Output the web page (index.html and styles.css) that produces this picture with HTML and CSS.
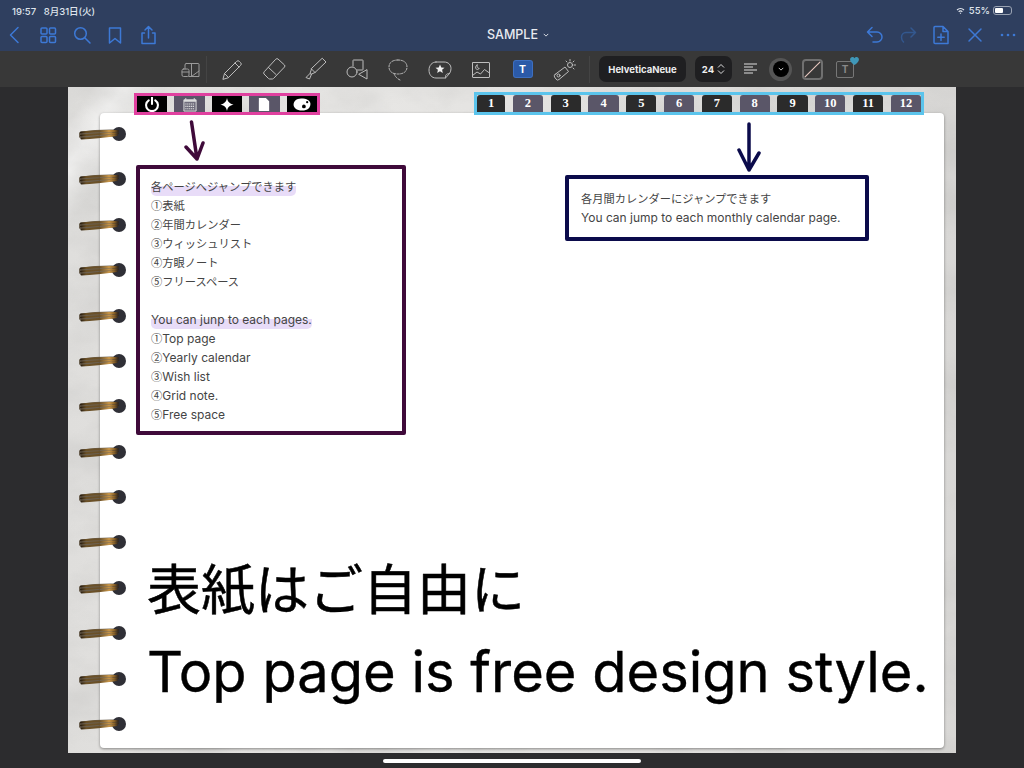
FILE: index.html
```html
<!DOCTYPE html>
<html lang="ja">
<head>
<meta charset="utf-8">
<title>SAMPLE</title>
<link rel="stylesheet" href="styles.css">
</head>
<body>
<svg class="defs" width="0" height="0">
  <defs>
    <linearGradient id="gold" x1="0" x2="1" y1="0" y2="0">
      <stop offset="0" stop-color="#2b1f10"/>
      <stop offset=".14" stop-color="#6b5127"/>
      <stop offset=".5" stop-color="#6a5028"/>
      <stop offset=".76" stop-color="#c9974a"/>
      <stop offset=".9" stop-color="#8a6228"/>
      <stop offset="1" stop-color="#33261a"/>
    </linearGradient>
    <symbol id="ring" viewBox="0 0 48 20">
      <path d="M3 11Q18 8.500 38 9" fill="none" stroke="#3a2b16" stroke-width="7" stroke-linecap="round" opacity=".7"/>
      <circle cx="40" cy="10" r="7" fill="#2f2f36"/>
      <path d="M2 8.500Q16 6.500 39 7M2 11.500Q18 9.800 39 9.200M2.500 14.500Q18 13.500 38 11" fill="none" stroke="url(#gold)" stroke-width="2" stroke-linecap="round"/>
    </symbol>
    <filter id="marble" x="0" y="0" width="100%" height="100%">
      <feTurbulence type="fractalNoise" baseFrequency=".012 .02" numOctaves="5" seed="7"/>
      <feColorMatrix values="0 0 0 0 .45  0 0 0 0 .45  0 0 0 0 .44  1.600 0 0 0 -.62"/>
    </filter>
  </defs>
</svg>
<div class="app">
  <header class="top">
    <div class="status">
      <span>19:57&nbsp;&nbsp; 8月31日(火)</span>
      <span class="status-right">
        <svg class="wifi" viewBox="0 0 12 9"><path d="M.8 3.300a7.400 7.400 0 0 1 10.400 0l-1.200 1.200a5.700 5.700 0 0 0-8 0zM3 5.500a4.300 4.300 0 0 1 6 0L7.800 6.700a2.600 2.600 0 0 0-3.600 0zM6 7l1 1-1 1-1-1z" fill="currentColor"/></svg>
        <span>55%</span>
        <span class="battery"><span class="battery-fill"></span></span>
      </span>
    </div>
    <nav class="nav">
      <div class="nav-group">
        <svg class="nav-icon" viewBox="0 0 20 20"><path d="M13 2.500 5.500 10l7.500 7.500"/></svg>
        <svg class="nav-icon" viewBox="0 0 20 20"><rect x="3" y="3" width="6" height="6" rx="1"/><rect x="11.500" y="3" width="6" height="6" rx="1"/><rect x="3" y="11.500" width="6" height="6" rx="1"/><rect x="11.500" y="11.500" width="6" height="6" rx="1"/></svg>
        <svg class="nav-icon" viewBox="0 0 20 20"><circle cx="8.500" cy="8.500" r="5.800"/><path d="m13 13 5 5"/></svg>
        <svg class="nav-icon" viewBox="0 0 20 20"><path d="M4.500 3h11v15L10 13.500 4.500 18z"/></svg>
        <svg class="nav-icon" viewBox="0 0 20 20"><path d="M6.500 8H4v10.500h13V8h-2.500M10.500 13V2M7 5l3.500-3.500L14 5"/></svg>
      </div>
      <div class="title">SAMPLE <svg class="title-chev" viewBox="0 0 8 5"><path d="m1 1 3 3 3-3"/></svg></div>
      <div class="nav-group">
        <svg class="nav-icon" viewBox="0 0 20 20"><path d="M7 2.500 2.500 7 7 11.500M3 7h9a4.800 4.800 0 0 1 0 10H8"/></svg>
        <svg class="nav-icon dim" viewBox="0 0 20 20"><path d="M13 3l4.500 4.500L13 12M17 7.500H8a4.800 4.800 0 0 0-4.500 5c0 2 .8 3.300 2 4.500"/></svg>
        <svg class="nav-icon" viewBox="0 0 20 20"><path d="M4 1.500h8l5 5v12H4a1 1 0 0 1-1-1v-15a1 1 0 0 1 1-1zM12 1.500v5h5M10 9v6.500M6.800 12.300H13.200"/></svg>
        <svg class="nav-icon" viewBox="0 0 20 20"><path d="m4 4 12 12M16 4 4 16"/></svg>
        <svg class="nav-icon" viewBox="0 0 20 20"><circle cx="4" cy="10" r="1.300" class="solid"/><circle cx="10" cy="10" r="1.300" class="solid"/><circle cx="16" cy="10" r="1.300" class="solid"/></svg>
      </div>
    </nav>
  </header>

  <div class="toolbar">
    <svg class="tool faint" viewBox="0 0 24 24"><path d="M8 6.500h12.500a.8.8 0 0 1 .5.500v12.500H11M13.500 6.500v13M21 14l-7.500 5.500M7 12V8a1.500 1.500 0 0 1 1-1.500"/><rect x="4" y="12" width="7" height="7.500" rx="1.500"/><path d="M4 15h7"/></svg>
    <span class="divider"></span>
    <div class="tools">
      <svg class="tool" viewBox="0 0 24 24"><path d="m3 22 1.500-5.500L16.500 4.500a2 2 0 0 1 3 0l1 1a2 2 0 0 1 0 3L8.500 20.500zM4.500 16.500l4 4M15 6l4 4"/></svg>
      <svg class="tool" viewBox="0 0 24 24"><path d="M14 2a1.500 1.500 0 0 1 2 0l6.500 6a1.500 1.500 0 0 1 0 2L11.500 21.500a1.500 1.500 0 0 1-1 .5H7.500a1.500 1.500 0 0 1-1-.5L2 17a1.500 1.500 0 0 1 0-2zM6.500 10.500l7.500 7"/></svg>
      <svg class="tool" viewBox="0 0 24 24"><path d="M19.500 1.500 23 5 12 15.500 8.500 12zM8.500 12l-1.500 4.500 1 .8 4-1.800M7 16.500 3 20.500l3.500 1.500 2-4.700"/></svg>
      <svg class="tool" viewBox="0 0 24 24"><path d="M8 9V3.500a.5.500 0 0 1 .5-.5h9a.5.500 0 0 1 .5.500v9a.5.500 0 0 1-.5.500H12"/><circle cx="7" cy="15" r="5"/><path d="M22 13v9l-8-4.500z"/></svg>
      <svg class="tool dash" viewBox="0 0 24 24"><path d="M12 3c5.500 0 9 2.500 9 7s-3.500 7-9 7-9-2.500-9-7 3.500-7 9-7zM8 16.500c1 3 3 5 6 6.500"/></svg>
      <svg class="tool" viewBox="0 0 24 24"><path d="M8 5h8c4.500 0 7 3 7 6.500 0 2-.5 3.500-1.500 5L17.500 21H8c-4.500 0-7-3.500-7-8s3-8 7-8zM17.500 21c-.5-3 1-4.500 4-4.500"/><path class="solid" d="m12 7.500 1.300 2.900 3.200.3-2.400 2.100.7 3.100-2.800-1.600-2.800 1.600.7-3.100-2.400-2.100 3.200-.3z"/></svg>
      <svg class="tool" viewBox="0 0 24 24"><rect x="3.500" y="5.500" width="17" height="15" rx=".5"/><path d="m3.500 18.500 4.500-3.500 3.500 2 4-4.500 5 3.500M8 8c-1.500.8-2 3-.5 4.300 1 .4 2.200.1 2.700-1-1.200 0-2.200-.8-2.200-3.300z"/></svg>
      <span class="tool-text"><span class="tool-text-t">T</span></span>
      <svg class="tool" viewBox="0 0 24 24"><path d="m3 17.500 10-7.500 3.500 4.500-9.500 8a2 2 0 0 1-3-.5l-1.500-2a2 2 0 0 1 .5-2.500z"/><circle cx="6.500" cy="18.500" r="1.500"/><circle cx="18" cy="8" r="2.500"/><path d="M18 2.500V4M23.500 8H22M14 4l1 1M22 4l-1 1M22 12l-1-1"/></svg>
    </div>
    <span class="divider divider-b"></span>
    <span class="pill pill-font">HelveticaNeue</span>
    <span class="pill pill-size">24 <svg class="updown" viewBox="0 0 8 12"><path d="m1 4.500 3-3 3 3M1 7.500l3 3 3-3"/></svg></span>
    <svg class="align" viewBox="0 0 14 12"><path d="M0 1h13M0 4h9M0 7h13M0 10h9"/></svg>
    <span class="swatch"><span class="swatch-in"><svg viewBox="0 0 8 5"><path d="m1 1 3 3 3-3"/></svg></span></span>
    <span class="stroke-box"><svg viewBox="0 0 20 20"><path d="M1 19 19 1"/></svg></span>
    <span class="text-fav"><span class="text-fav-t">T</span><svg class="fav-heart" viewBox="0 0 10 9"><path d="M5 9C2 7 0 5 0 2.800 0 1 1.300 0 2.600 0 3.600 0 4.500.5 5 1.500 5.500.5 6.400 0 7.400 0 8.700 0 10 1 10 2.800 10 5 8 7 5 9z"/></svg></span>
  </div>

  <main class="stage">
    <section class="page">
      <svg class="marble"><rect width="100%" height="100%" filter="url(#marble)"/></svg>
      <div class="rings">
        <svg class="ring"><use href="#ring"/></svg><svg class="ring"><use href="#ring"/></svg><svg class="ring"><use href="#ring"/></svg><svg class="ring"><use href="#ring"/></svg><svg class="ring"><use href="#ring"/></svg><svg class="ring"><use href="#ring"/></svg><svg class="ring"><use href="#ring"/></svg><svg class="ring"><use href="#ring"/></svg><svg class="ring"><use href="#ring"/></svg><svg class="ring"><use href="#ring"/></svg><svg class="ring"><use href="#ring"/></svg><svg class="ring"><use href="#ring"/></svg><svg class="ring"><use href="#ring"/></svg><svg class="ring"><use href="#ring"/></svg>
      </div>

      <div class="sheet">
        <div class="big">
          <p class="big-jp">表紙はご自由に</p>
          <p class="big-en">Top page is free design style.</p>
        </div>
      </div>

      <div class="tabs tabs-pink">
        <span class="ptab"><svg viewBox="0 0 16 16"><path d="M4.500 3.500a6.300 6.300 0 1 0 7 0M8 .5V7.500" fill="none" stroke="#fff" stroke-width="2.200" stroke-linecap="round"/></svg></span>
        <span class="ptab alt"><svg viewBox="0 0 16 16"><path d="M1.500 3h13v12h-13z" fill="#6f6c7c" stroke="#ddd"/><path d="M1.500 3h13v2h-13zM3 1h1v2H3zM12 1h1v2h-1z" fill="#ddd"/><path d="M3 7.500h10M3 10h10M3 12.500h10" stroke="#ddd" stroke-width="1.200" stroke-dasharray="1.300 .7"/></svg></span>
        <span class="ptab"><svg viewBox="0 0 16 16"><path d="M8 1c.7 4 2.700 6 7 7-4.300 1-6.300 3-7 7-.7-4-2.700-6-7-7 4.300-1 6.300-3 7-7z" fill="#fff"/></svg></span>
        <span class="ptab alt"><svg viewBox="0 0 16 16"><path d="M2.500 1h7.500l3.500 3.500V15h-11z" fill="#fff"/></svg></span>
        <span class="ptab"><svg class="palette" viewBox="0 0 20 16"><path d="M9 1.500c6 0 10 2 10 6s-3 7-9 7c-6 0-9-3-9-6.500S4 1.500 9 1.500z" fill="#fff"/><circle cx="12" cy="10" r="2" fill="#000"/><circle cx="15.500" cy="5.500" r="1.200" fill="#000"/></svg></span>
      </div>

      <div class="tabs tabs-blue">
        <span class="ntab">1</span><span class="ntab alt">2</span><span class="ntab">3</span><span class="ntab alt">4</span><span class="ntab">5</span><span class="ntab alt">6</span><span class="ntab">7</span><span class="ntab alt">8</span><span class="ntab">9</span><span class="ntab alt">10</span><span class="ntab">11</span><span class="ntab alt">12</span>
      </div>

      <svg class="arrow arrow-left" viewBox="0 0 24 44"><path d="M7.500 2 13 39M2 27l11 12 6-16"/></svg>
      <svg class="arrow arrow-right" viewBox="0 0 24 50"><path d="M12 2v46M2 28l10 20 10-17"/></svg>

      <div class="note note-purple">
        <p class="jp"><span class="mark">各ページへジャンプできます</span></p>
        <p class="jp">①表紙</p>
        <p class="jp">②年間カレンダー</p>
        <p class="jp">③ウィッシュリスト</p>
        <p class="jp">④方眼ノート</p>
        <p class="jp">⑤フリースペース</p>
        <p>&nbsp;</p>
        <p><span class="mark">You can junp to each pages.</span></p>
        <p><span class="jp">①</span>Top page</p>
        <p><span class="jp">②</span>Yearly calendar</p>
        <p><span class="jp">③</span>Wish list</p>
        <p><span class="jp">④</span>Grid note.</p>
        <p><span class="jp">⑤</span>Free space</p>
      </div>

      <div class="note note-navy">
        <p class="jp">各月間カレンダーにジャンプできます</p>
        <p>You can jump to each monthly calendar page.</p>
      </div>
    </section>
    <div class="home-bar"></div>
  </main>
</div>
</body>
</html>
```
FILE: styles.css
```css
* { box-sizing: border-box; }
html, body { margin: 0; padding: 0; }
body {
  width: 1024px;
  height: 768px;
  overflow: hidden;
  background: #2c2c2e;
  font-family: Inter, "Noto Sans CJK JP", sans-serif;
}
p { margin: 0; }
.defs { position: absolute; }
.app { display: flex; flex-direction: column; height: 768px; }

/* top blue bar */
.top { height: 51px; background: #2f3f5f; flex: none; }
.status {
  height: 20px;
  padding: 1px 12px 0 12px;
  display: flex;
  justify-content: space-between;
  align-items: center;
  color: #dfe4ec;
  font-size: 9.500px;
  font-weight: 500;
}
.status-right { display: flex; align-items: center; gap: 3px; }
.wifi { width: 9px; height: 7px; margin-right: 1px; }
.battery {
  width: 19px;
  height: 9px;
  border: 1px solid #9aa3b3;
  border-radius: 3px;
  padding: 1px;
  display: flex;
}
.battery-fill { width: 55%; background: #fff; border-radius: 1px; }
.nav {
  height: 31px;
  padding: 0 6px 2px 5px;
  display: flex;
  align-items: center;
  justify-content: space-between;
}
.nav-group { display: flex; gap: 13.300px; }
.nav-icon {
  width: 20px;
  height: 20px;
  fill: none;
  stroke: #3d79d6;
  stroke-width: 1.500;
  stroke-linecap: round;
  stroke-linejoin: round;
}
.nav-icon.dim { stroke: #33588f; }
.nav-icon .solid { fill: #3d79d6; stroke: none; }
.title {
  color: #e8ebf1;
  font-size: 12.500px;
  font-weight: 500;
  display: flex;
  align-items: center;
  gap: 5px;
  margin-left: 13px;
}
.title-chev { width: 6px; height: 4px; fill: none; stroke: #e8ebf1; stroke-width: 1.200; }

/* tool bar */
.toolbar {
  height: 36px;
  flex: none;
  background: #383838;
  display: flex;
  align-items: center;
  padding-left: 178px;
}
.tool {
  width: 24px;
  height: 24px;
  flex: none;
  fill: none;
  stroke: #bdbdbd;
  stroke-width: 1;
  stroke-linejoin: round;
  stroke-linecap: round;
}
.tool.faint { stroke: #9a9a9a; }
.tool .solid { fill: #eee; stroke: none; }
.tool.dash { stroke-dasharray: 2 1.500; }
.divider { width: 1px; height: 27px; background: #444; margin: 0 13px 0 4px; flex: none; }
.divider-b { margin: 0 9px 0 13px; }
.tools { display: flex; gap: 17.500px; align-items: center; }
.tool-text { width: 24px; height: 24px; display: flex; align-items: center; justify-content: center; }
.tool-text-t {
  width: 18px;
  height: 16px;
  background: #2b5aa8;
  border-radius: 2px;
  color: #fff;
  font-size: 10.500px;
  font-weight: 700;
  display: flex;
  align-items: center;
  justify-content: center;
  box-shadow: 0 0 0 1px #3d6fc0;
}
.pill {
  height: 26px;
  background: #1f1f21;
  border-radius: 7px;
  color: #eee;
  font-size: 9.500px;
  font-weight: 700;
  display: flex;
  align-items: center;
  justify-content: center;
  flex: none;
}
.pill-font { width: 87px; }
.pill-size { width: 37px; margin-left: 9px; gap: 3px; }
.updown { width: 8px; height: 12px; fill: none; stroke: #ddd; stroke-width: 1; }
.align { width: 14px; height: 12px; margin-left: 12px; fill: none; stroke: #ddd; stroke-width: 1.100; flex: none; }
.swatch {
  width: 23px;
  height: 23px;
  margin-left: 11px;
  border-radius: 50%;
  background: #555;
  display: flex;
  align-items: center;
  justify-content: center;
  flex: none;
}
.swatch-in {
  width: 16px;
  height: 16px;
  border-radius: 50%;
  background: #000;
  display: flex;
  align-items: center;
  justify-content: center;
}
.swatch-in svg { width: 6px; height: 4px; fill: none; stroke: #ddd; stroke-width: 1.200; }
.stroke-box {
  width: 21px;
  height: 21px;
  margin-left: 10px;
  border: 2px solid #707070;
  border-radius: 4px;
  display: flex;
  flex: none;
}
.stroke-box svg { width: 100%; height: 100%; fill: none; stroke: #e8c8c0; stroke-width: 1.300; }
.text-fav {
  width: 18px;
  height: 17px;
  margin-left: 13px;
  border: 1px solid #777;
  border-radius: 2px;
  color: #888;
  font-size: 10px;
  font-weight: 700;
  display: flex;
  align-items: center;
  justify-content: center;
  position: relative;
  flex: none;
}
.fav-heart {
  position: absolute;
  top: -5px;
  right: -6px;
  width: 9px;
  height: 8px;
  fill: #3f97b8;
}

/* page */
.stage { flex: 1; padding: 0 68px; position: relative; }
.page {
  position: relative;
  height: 666px;
  padding: 26px 12px 5px 32px;
  display: flex;
  background:
    linear-gradient(125deg, transparent 20px, rgba(255,255,255,.55) 45px, transparent 80px),
    linear-gradient(90deg, #dfdedc, #e8e7e5 30%, #e0dfdd 70%, #d8d7d5);
}
.marble { position: absolute; left: 0; top: 0; width: 100%; height: 100%; opacity: .35; }
.sheet {
  position: relative;
  flex: 1;
  min-width: 0;
  background: #fff;
  border-radius: 4px;
  box-shadow: 0 1px 3px rgba(0,0,0,.4);
  display: flex;
  flex-direction: column;
  justify-content: flex-end;
}
.big { padding: 0 0 35px 47px; color: #000; white-space: nowrap; }
.big-jp { font-size: 54px; line-height: 82px; margin-bottom: -1px; -webkit-text-stroke: .5px #000; }
.big-en { font-size: 56px; line-height: 82px; -webkit-text-stroke: .4px #000; }

.rings {
  position: absolute;
  left: 11px;
  top: 37px;
  height: 610px;
  display: flex;
  flex-direction: column;
  justify-content: space-between;
  z-index: 1;
}
.ring { width: 48px; height: 20px; display: block; }

.tabs {
  position: absolute;
  display: flex;
  border-style: solid;
  border-width: 3px;
}
.tabs-pink {
  left: 66px;
  top: 6px;
  width: 186px;
  height: 22px;
  border-color: #e0409f;
  gap: 7px;
}
.tabs-blue {
  left: 406px;
  top: 5px;
  width: 450px;
  height: 23px;
  border-color: #5bc4ec;
  gap: 7.500px;
}
.ptab {
  flex: 1;
  background: #000;
  display: flex;
  align-items: center;
  justify-content: center;
}
.ptab.alt { background: #5a5668; }
.ptab svg { width: 16px; height: 15px; }
.ptab .palette { width: 20px; }
.ntab {
  width: 30.500px;
  background: #2b2b2b;
  border-radius: 3px 3px 0 0;
  color: #fff;
  font-family: "Liberation Serif", serif;
  font-size: 12.500px;
  font-weight: 700;
  display: flex;
  align-items: center;
  justify-content: center;
}
.ntab:first-child { width: 28.500px; }
.ntab.alt { background: #5a5668; }

.arrow { position: absolute; fill: none; stroke-width: 3.500; stroke-linecap: round; stroke-linejoin: round; }
.arrow-left { left: 116px; top: 33px; width: 24px; height: 44px; stroke: #3f0a3a; }
.arrow-right { left: 669px; top: 35px; width: 24px; height: 50px; stroke: #0b0b4b; }

.note {
  position: absolute;
  background: #fff;
  border-style: solid;
  border-width: 4px;
  border-radius: 2px;
  color: #444;
  font-size: 12px;
  line-height: 19px;
  white-space: nowrap;
}
.jp { font-family: "Noto Sans CJK JP", sans-serif; font-size: 11.250px; }
.note-purple { left: 68px; top: 78px; width: 270px; height: 270px; border-color: #3f0a3a; padding: 8px 0 0 11px; }
.note-navy { left: 497px; top: 88px; width: 304px; height: 66px; border-color: #0b0b4b; padding: 10px 0 0 12px; }
.mark {
  display: inline-block;
  background: linear-gradient(transparent 50%, #e8dcf8 50%);
  border-radius: 5px;
}
.home-bar {
  position: absolute;
  left: 383px;
  bottom: 5px;
  width: 258px;
  height: 4px;
  border-radius: 2px;
  background: #fff;
}
```
